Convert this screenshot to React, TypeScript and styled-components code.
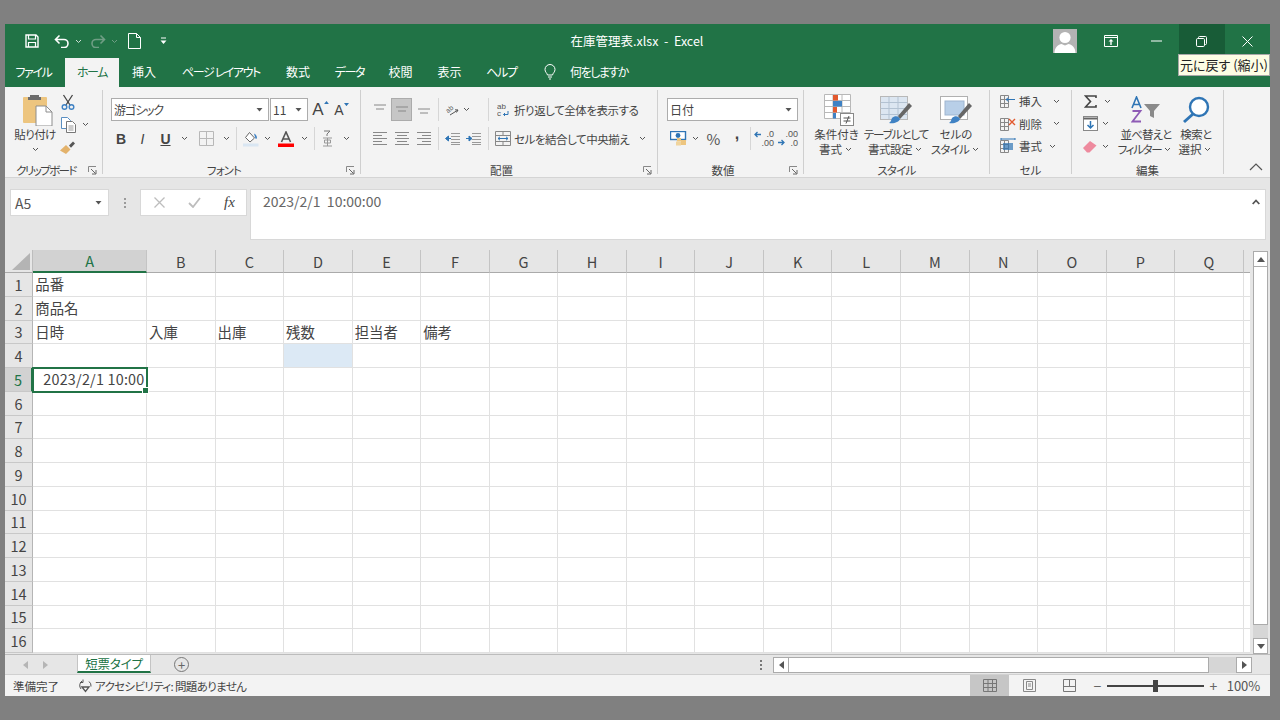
import React from "react";
import styled, { createGlobalStyle } from "styled-components";

const Global = createGlobalStyle`
  html, body { margin: 0; padding: 0; background: #808080; }
  #root { width: 1280px; height: 720px; overflow: hidden; }
  * { box-sizing: border-box; }
`;

const UI = `"Noto Sans CJK JP", "Noto Sans", sans-serif`;
const GREEN = "#217346";

const Page = styled.div`
  width: 1280px; height: 720px; padding: 24px 10px 24px 5px;
  background: #808080;
`;
const Win = styled.div`
  position: relative; height: 672px; display: flex; flex-direction: column;
  background: #e6e6e6; font-family: ${UI}; font-feature-settings: "palt"; color: #444;
`;
const TitleBar = styled.div`
  height: 34px; flex: none; background: ${GREEN}; display: flex; align-items: center; color: #fff;
`;
const Qat = styled.div`
  width: 497px; display: flex; align-items: center; padding-left: 18px; height: 100%;
`;
const Title = styled.div`
  width: 270px; text-align: center; font-size: 12.5px; white-space: pre; padding-bottom: 1px;
`;
const TitleRight = styled.div`
  flex: 1; display: flex; justify-content: flex-end; align-items: center; height: 100%;
`;
const Avatar = styled.div`
  width: 24px; height: 24px; margin-right: 11px; background: #b3b3b3; display: flex; overflow: hidden;
`;
const WinBtn = styled.div<{ $hover?: boolean }>`
  width: 45.5px; height: 100%; display: flex; align-items: center; justify-content: center;
  background: ${p => (p.$hover ? "#185c37" : "transparent")};
`;
const Tip = styled.div`
  position: absolute; left: 1173px; top: 30px; width: 92px; height: 22px;
  background: #fdfde4; border: 1px solid #a8a8a8; color: #222; font-size: 13px;
  line-height: 20px; padding-left: 1px; white-space: nowrap; z-index: 5; overflow: hidden;
`;
const Tabs = styled.div`
  height: 29px; flex: none; background: ${GREEN}; display: flex; align-items: stretch;
`;
const Tab = styled.div<{ $w: number; $active?: boolean; $ls?: number; $pr?: number }>`
  width: ${p => p.$w}px; display: flex; align-items: center; justify-content: center;
  font-size: 12px; white-space: nowrap; padding-bottom: 2px; padding-right: ${p => p.$pr ?? 0}px;
  letter-spacing: ${p => p.$ls ?? 0}px;
  color: ${p => (p.$active ? GREEN : "#fff")};
  background: ${p => (p.$active ? "#f3f3f3" : "transparent")};
`;
const Ribbon = styled.div`
  height: 91px; flex: none; background: #f3f3f3; display: flex; border-bottom: 1px solid #d4d4d4;
  padding-top: 3px;
`;
const Group = styled.div<{ $w: number; $sep?: boolean }>`
  width: ${p => p.$w}px; flex: none; display: flex; flex-direction: column; height: 84px;
  border-right: ${p => (p.$sep === false ? "none" : "1px solid #cfcfcf")};
`;
const GroupBody = styled.div`
  flex: 1; display: flex; min-height: 0;
`;
const GroupFoot = styled.div<{ $plain?: boolean }>`
  height: 14px; flex: none; display: grid; grid-template-columns: 1fr auto 1fr; align-items: center;
  font-size: 11.5px; color: #444; line-height: 14px; padding-right: ${p => (p.$plain ? 0 : 15)}px;
  margin-bottom: -3px; white-space: nowrap;
`;
const Launcher = styled.div`
  justify-self: end; display: flex; margin-right: -10px;
`;
const Col = styled.div<{ $pt?: number; $pl?: number; $gap?: number }>`
  display: flex; flex-direction: column; padding-top: ${p => p.$pt ?? 0}px; padding-left: ${p => p.$pl ?? 0}px;
  gap: ${p => p.$gap ?? 0}px;
`;
const Row = styled.div<{ $h?: number; $pl?: number; $mt?: number }>`
  display: flex; align-items: center; height: ${p => (p.$h ? p.$h + "px" : "auto")};
  padding-left: ${p => p.$pl ?? 0}px; font-size: 11.5px; white-space: nowrap; margin-top: ${p => p.$mt ?? 0}px;
`;
const Lbl = styled.span<{ $ml?: number; $ls?: number; $mt?: number; $size?: number }>`
  margin-left: ${p => p.$ml ?? 0}px; margin-top: ${p => p.$mt ?? 0}px; letter-spacing: ${p => p.$ls ?? 0}px;
  ${p => (p.$size ? `font-size: ${p.$size}px;` : "")}
`;
const T = styled.div<{ $w: number; $h?: number; $on?: boolean; $ml?: number }>`
  width: ${p => p.$w}px; height: ${p => (p.$h ? p.$h + "px" : "23px")}; flex: none; margin-left: ${p => p.$ml ?? 0}px;
  display: flex; align-items: center; justify-content: center;
  background: ${p => (p.$on ? "#c6c6c6" : "transparent")};
  border: ${p => (p.$on ? "1px solid #ababab" : "none")};
`;
const VSep = styled.div<{ $h: number; $mx: number }>`
  width: 1px; height: ${p => p.$h}px; background: #d6d6d6; margin: 0 ${p => p.$mx}px; flex: none;
`;
const Big = styled.div<{ $w: number; $ml?: number }>`
  width: ${p => p.$w}px; flex: none; display: flex; flex-direction: column; align-items: center;
  margin-left: ${p => p.$ml ?? 0}px;
  font-size: 11.5px; line-height: 15px; white-space: nowrap; color: #444;
`;
const BigIcon = styled.div<{ $ml?: number }>`
  height: 35px; margin-top: 2px; margin-left: ${p => p.$ml ?? 0}px;
  display: flex; align-items: center; justify-content: center;
`;
const Sel = styled.div<{ $w: number; $ml?: number }>`
  width: ${p => p.$w}px; height: 23px; margin-left: ${p => p.$ml ?? 0}px; background: #fff; border: 1px solid #acacac;
  display: flex; align-items: center; justify-content: space-between; padding: 0 5px 0 2px;
  font-size: 12px; color: #444; flex: none;
`;
const Bold = styled.span<{ $style?: string; $size?: number; $weight?: number; $under?: boolean }>`
  font-family: "Liberation Sans", sans-serif; font-weight: ${p => p.$weight ?? 700}; font-size: ${p => p.$size ?? 14}px; color: #444;
  font-style: ${p => p.$style ?? "normal"}; text-decoration: ${p => (p.$under ? "underline" : "none")};
`;
const Sized = styled.div`
  display: flex; align-items: flex-start; line-height: 1;
`;
const Comma = styled(Bold)`
  padding-bottom: 9px; line-height: 1;
`;
const Percent = styled.span`
  font-size: 15px; color: #555;
`;
const FormulaZone = styled.div`
  height: 72px; flex: none; background: #e6e6e6; display: flex; padding: 11px 4px 0 5px; align-items: flex-start;
`;
const NameBox = styled.div`
  width: 99px; height: 27px; background: #fff; border: 1px solid #d8d8d8; display: flex; align-items: center;
  justify-content: space-between; padding: 0 6px 0 4px; font-size: 14px; color: #555;
`;
const Dots = styled.div`
  width: 31px; display: flex; flex-direction: column; align-items: center; gap: 2px; height: 27px; justify-content: center;
  & > i { width: 2px; height: 2px; background: #9a9a9a; display: block; }
`;
const FBtns = styled.div`
  width: 107px; height: 27px; background: #fff; border: 1px solid #d8d8d8; display: flex; align-items: center;
  padding-left: 1px;
`;
const FInput = styled.div`
  margin-left: 3px; flex: 1; height: 51px; background: #fff; border: 1px solid #d8d8d8; display: flex;
  justify-content: space-between; padding: 2px 4px 0 12px; font-size: 14px; color: #666; white-space: pre; line-height: 18px;
`;
const SheetArea = styled.div`
  height: 404px; flex: none; display: flex; background: #e6e6e6;
`;
const Sheet = styled.div`
  width: 1245px; flex: none; overflow: hidden;
  display: grid; grid-template-columns: 28.25px 113.75px repeat(17, 68.55px);
  grid-template-rows: 23px repeat(16, 23.75px); align-content: start; background: #fff;
  height: 403px;
`;
const Corner = styled.div`
  background: #e6e6e6; border-right: 1px solid #bdbdbd; border-bottom: 1px solid #aaa; display: flex; align-items: flex-end; justify-content: flex-end; padding: 0 2px 2px 0;
`;
const ColHead = styled.div<{ $on?: boolean }>`
  background: ${p => (p.$on ? "#d2d2d2" : "#e6e6e6")}; color: ${p => (p.$on ? GREEN : "#444")};
  border-right: 1px solid #c4c4c4;
  border-bottom: ${p => (p.$on ? `2px solid ${GREEN}` : "1px solid #aaa")};
  display: flex; align-items: center; justify-content: center; font-size: 14.5px;
`;
const RowHead = styled.div<{ $on?: boolean }>`
  background: ${p => (p.$on ? "#d2d2d2" : "#e6e6e6")}; color: ${p => (p.$on ? GREEN : "#444")};
  border-right: ${p => (p.$on ? `2px solid ${GREEN}` : "1px solid #b5b5b5")};
  border-bottom: 1px solid #c8c8c8;
  display: flex; align-items: center; justify-content: center; font-size: 14.5px;
`;
const Cell = styled.div<{ $sel?: boolean; $tint?: boolean; $right?: boolean }>`
  position: relative; border-right: 1px solid #e1e1e1; border-bottom: 1px solid #e1e1e1;
  background: ${p => (p.$tint ? "#dce9f5" : "#fff")};
  font-size: 14.4px; color: #444; line-height: 22px; padding: 0 ${p => (p.$right ? 1.5 : 2)}px; white-space: nowrap;
  text-align: ${p => (p.$right ? "right" : "left")}; font-feature-settings: normal;
  letter-spacing: ${p => (p.$right ? 0.2 : 0)}px;
  outline: ${p => (p.$sel ? `2px solid ${GREEN}` : "none")}; outline-offset: -1px; z-index: ${p => (p.$sel ? 2 : 0)};
  &::after {
    content: ""; display: ${p => (p.$sel ? "block" : "none")}; position: absolute; right: -3px; bottom: -3px;
    width: 5px; height: 5px; background: ${GREEN}; border: 1px solid #fff;
  }
`;
const VScroll = styled.div`
  width: 20px; flex: none; height: 404px; display: flex; flex-direction: column; padding: 1px 2px 0 3px; background: #e6e6e6;
`;
const SBtn = styled.div<{ $w?: number; $h?: number }>`
  width: ${p => (p.$w ? p.$w + "px" : "15px")}; height: ${p => (p.$h ? p.$h + "px" : "16px")}; background: #fff; border: 1px solid #ababab; flex: none;
  display: flex; align-items: center; justify-content: center;
`;
const VThumb = styled.div`
  height: 358px; width: 15px; background: #fff; border: 1px solid #ababab; border-top: none; flex: none;
`;
const VTrack = styled.div`
  flex: 1; background: #d6d6d6; width: 15px; min-height: 0;
`;
const TabBar = styled.div`
  height: 21px; flex: none; background: #e6e6e6; border-top: 1px solid #bcbcbc; border-bottom: 1px solid #d0d0d0; display: flex; align-items: center; position: relative;
`;
const SheetNav = styled.div`
  width: 72px; display: flex; align-items: center; justify-content: center; gap: 15px; padding-right: 12px;
`;
const SheetTab = styled.div`
  width: 74px; height: 18px; align-self: flex-start; background: #fff; color: ${GREEN}; border-left: 1px solid #c4c4c4; border-right: 1px solid #c4c4c4;
  border-bottom: 2px solid ${GREEN}; font-size: 12.5px; letter-spacing: -0.2px; display: flex; align-items: center; justify-content: center;
`;
const AddSheet = styled.div`
  width: 15px; height: 15px; border: 1px solid #777; border-radius: 50%; margin-left: 23px; color: #666;
  display: flex; align-items: center; justify-content: center; font-size: 13px; line-height: 1;
`;
const HScrollWrap = styled.div`
  margin-left: auto; display: flex; align-items: center; height: 100%; margin-right: 18px;
`;
const HDots = styled.div`
  width: 24px; display: flex; flex-direction: column; align-items: center; gap: 2px;
  & > i { width: 2px; height: 2px; background: #777; display: block; }
`;
const HThumb = styled.div`
  width: 420px; height: 16px; background: #fff; border: 1px solid #ababab; border-left: none; flex: none;
`;
const HTrack = styled.div`
  width: 27px; height: 16px; background: #d6d6d6; flex: none;
`;
const Status = styled.div`
  flex: 1; background: #f3f3f3; display: flex; align-items: center; font-size: 11.5px; color: #444; padding-left: 8px;
`;
const StatusMsg = styled.div`
  display: flex; align-items: center; margin-left: 19px; gap: 2px; letter-spacing: -0.65px;
`;
const StatusRight = styled.div`
  margin-left: auto; display: flex; align-items: center; height: 100%;
`;
const ViewBtn = styled.div<{ $w: number; $on?: boolean }>`
  width: ${p => p.$w}px; height: 100%; display: flex; align-items: center; justify-content: center;
  background: ${p => (p.$on ? "#c6c6c6" : "transparent")};
`;
const Zoom = styled.div`
  width: 97px; height: 2px; background: #444; position: relative; margin: 0 3px;
  &::after { content: ""; position: absolute; left: 46px; top: -5px; width: 5px; height: 12px; background: #444; }
`;
const ZoomSign = styled.div<{ $ml?: number }>`
  width: 13px; text-align: center; font-size: 14px; color: #666; line-height: 1; margin-left: ${p => p.$ml ?? 0}px;
`;
const Pct = styled.div`
  width: 50px; text-align: center; font-size: 13px; color: #555; padding-right: 3px;
`;
const DecBox = styled.div`
  display: grid; grid-template-columns: 7px 13px; row-gap: 0; align-items: center; width: 20px;
`;
const DecText = styled.span`
  font-family: "Liberation Sans", sans-serif; font-size: 9px; line-height: 8.5px; color: #555; text-align: right; font-weight: 400; grid-column: 2;
`;
const Fx = styled.span`
  font-family: "Liberation Serif", serif; font-style: italic; font-size: 15px; font-weight: 400; color: #444;
`;
const SvgText = styled.text<{ $size?: number }>`
  font-family: "Liberation Sans", sans-serif; font-size: ${p => p.$size ?? 8}px; fill: #555;
`;

/* Icons */
const Chev = ({ c = "#555" }: { c?: string }) => (
  <svg width="7" height="5" viewBox="0 0 7 5"><path d="M1 1l2.500 2.500L6 1" fill="none" stroke={c} strokeWidth="1" /></svg>
);
const Caret = ({ c = "#555" }: { c?: string }) => (
  <svg width="7" height="4" viewBox="0 0 7 4"><path d="M0.500 0h6L3.500 3.500z" fill={c} /></svg>
);
const Launch = () => (
  <svg width="9" height="9" viewBox="0 0 9 9"><path d="M.5 6V.5H8" fill="none" stroke="#888" /><path d="M3 3l4.500 4.500M8 4v4H4" fill="none" stroke="#666" /></svg>
);
const Save = () => (
  <svg width="14" height="14" viewBox="0 0 14 14"><path d="M1 1h10l2 2v10H1z" fill="none" stroke="#fff" strokeWidth="1.400" /><path d="M3.500 1v4h7V1M3.500 13V8.500h7V13" fill="none" stroke="#fff" strokeWidth="1.200" /></svg>
);
const Undo = ({ c = "#fff" }: { c?: string }) => (
  <svg width="16" height="14" viewBox="0 0 16 14"><path d="M5.500 1.500L1.500 5.500l4 4M1.500 5.500H10a4 4 0 0 1 0 8H7" fill="none" stroke={c} strokeWidth="1.600" /></svg>
);
const Redo = () => (
  <svg width="16" height="14" viewBox="0 0 16 14"><path d="M10.500 1.500l4 4-4 4M14.500 5.500H6a4 4 0 0 0 0 8h3" fill="none" stroke="#6f9e85" strokeWidth="1.600" /></svg>
);
const NewDoc = () => (
  <svg width="13" height="16" viewBox="0 0 13 16"><path d="M.5.500h8l4 4v11H.5zM8.500.5v4h4" fill="none" stroke="#fff" /></svg>
);
const QatMore = () => (
  <svg width="7" height="8" viewBox="0 0 7 8"><path d="M1 1h5" stroke="#fff" /><path d="M.5 3.500h6L3.500 7z" fill="#fff" /></svg>
);
const Person = () => (
  <svg width="24" height="24" viewBox="0 0 24 24"><circle cx="12" cy="8.500" r="5.600" fill="#fff" /><path d="M1.500 24c0-6 4-8.500 7-9l3.500 1.500 3.500-1.500c3 .5 7 3 7 9z" fill="#fff" /></svg>
);
const RibbonDisp = () => (
  <svg width="14" height="12" viewBox="0 0 14 12"><path d="M.5.500h13v11H.5z" fill="none" stroke="#fff" /><path d="M.5 2.500h13" stroke="#fff" /><path d="M7 4L4.500 6.500h1.800V10h1.400V6.500h1.800z" fill="#fff" /></svg>
);
const Minimize = () => <svg width="11" height="2" viewBox="0 0 11 2"><path d="M0 1h11" stroke="#fff" /></svg>;
const Restore = () => (
  <svg width="11" height="11" viewBox="0 0 11 11"><path d="M2.500 2.500V1.500a1 1 0 0 1 1-1h6a1 1 0 0 1 1 1v6a1 1 0 0 1-1 1h-1" fill="none" stroke="#fff" /><rect x=".5" y="2.500" width="8" height="8" rx="1.200" fill="none" stroke="#fff" /></svg>
);
const Close = () => <svg width="11" height="11" viewBox="0 0 11 11"><path d="M.5.500l10 10M10.500.5l-10 10" stroke="#fff" /></svg>;
const Bulb = () => (
  <svg width="12" height="16" viewBox="0 0 12 16"><path d="M3.500 11C3 9 1 8 1 5.500a5 5 0 0 1 10 0C11 8 9 9 8.500 11zM4 13h4M5 15h2" fill="none" stroke="#fff" /></svg>
);
const Paste = () => (
  <svg width="30" height="32" viewBox="0 0 30 32">
    <rect x="0" y="3" width="24" height="26" rx="1" fill="#edc57f" />
    <path d="M7 3V1h9v2h2v3H5V3z" fill="#6d6d6d" />
    <path d="M13 12h10l6 6v14H13z" fill="#fff" stroke="#8d8d8d" />
    <path d="M23 12v6h6" fill="none" stroke="#8d8d8d" />
  </svg>
);
const Cut = () => (
  <svg width="14" height="16" viewBox="0 0 14 16"><path d="M2.500 1L9 11M11.500 1L5 11" stroke="#444" strokeWidth="1.300" fill="none" /><circle cx="3.500" cy="13" r="2.300" fill="none" stroke="#3f82c4" strokeWidth="1.400" /><circle cx="10.500" cy="13" r="2.300" fill="none" stroke="#3f82c4" strokeWidth="1.400" /></svg>
);
const Copy = () => (
  <svg width="15" height="16" viewBox="0 0 15 16"><path d="M.5.500h6l3 3v8H.5z" fill="#fff" stroke="#5a8fc2" /><path d="M5.500 4.500h6l3 3v8h-9z" fill="#fff" stroke="#777" /><path d="M7.500 9h5M7.500 11h5M7.500 13h5" stroke="#999" /></svg>
);
const Painter = () => (
  <svg width="16" height="14" viewBox="0 0 16 14"><path d="M0 9.500L6 4l4.500 4.500L6 13z" fill="#e3b26b" /><path d="M9 4.500L13 .5l2 2-4 4.200z" fill="#555" /></svg>
);
const Borders = () => (
  <svg width="15" height="15" viewBox="0 0 15 15"><path d="M.5.500h14v14H.5zM7.500.5v14M.5 7.500h14" fill="none" stroke="#b8b8b8" /></svg>
);
const Fill = () => (
  <svg width="16" height="16" viewBox="0 0 16 16"><path d="M6.500 1.500L11.500 7l-4.500 4-4.500-4.500z" fill="#fff" stroke="#666" /><path d="M11 2.500c2 1 3 2.500 3 5l-1.500.3z" fill="#3f82c4" /><rect x="0" y="12.500" width="15.500" height="3" fill="#d9e6f2" /></svg>
);
const FontColor = () => (
  <svg width="16" height="16" viewBox="0 0 16 16"><path d="M3.500 11L8 1l4.500 10M5.200 8h5.600" fill="none" stroke="#555" strokeWidth="1.600" /><rect x="0" y="12.500" width="16" height="3.500" fill="#f00" /></svg>
);
const Phonetic = () => (
  <svg width="11" height="17" viewBox="0 0 11 17"><path d="M2 1h6L5 4M5 4v2" fill="none" stroke="#777" /><path d="M1 8h9M2.500 10h6v3h-6zM5.500 8v8M1 16h9" fill="none" stroke="#999" /></svg>
);
const Lines = ({ ws }: { ws: [number, number][] }) => (
  <svg width="14" height="15" viewBox="0 0 14 15">
    {ws.map(([a, b], i) => <path key={i} d={`M${a} ${1.5 + i * 3}H${b}`} stroke="#888" />)}
  </svg>
);
const VAlign = ({ y }: { y: number }) => (
  <svg width="14" height="11" viewBox="0 0 14 11"><path d={`M1 ${y}h12M3 ${y + 4}h8`} stroke="#888" /></svg>
);
const Orient = () => (
  <svg width="16" height="15" viewBox="0 0 16 15">
    <SvgText $size={7} x="2" y="10" transform="rotate(-40 5 8)">ab</SvgText>
    <path d="M6 13l8-5M14 8l-3-.2M14 8l-1.500 2.500" stroke="#555" fill="none" />
  </svg>
);
const Indent = ({ flip }: { flip?: boolean }) => (
  <svg width="15" height="12" viewBox="0 0 15 12">
    <path d="M6 .5h9M6 3.500h9M6 6.500h9M6 9.500h9M6 11.500h9" stroke="#999" />
    <path d={flip ? "M0 5.500h3.500M3 3l3 2.500L3 8z" : "M6 5.500H3M3.500 3L.5 5.500 3.500 8z"} stroke="#2f75b5" fill="#2f75b5" />
  </svg>
);
const Wrap = () => (
  <svg width="12" height="16" viewBox="0 0 12 16">
    <SvgText x="0" y="7">ab</SvgText>
    <SvgText x="0" y="14">c</SvgText>
    <path d="M11 9v3.500H6.500M8 11l-1.500 1.500L8 14" fill="none" stroke="#2f75b5" />
  </svg>
);
const Merge = () => (
  <svg width="16" height="15" viewBox="0 0 16 15"><path d="M.5.500h15v14H.5zM.5 4.500h15M.5 10.500h15M8 .5v4M8 10.500v4" fill="none" stroke="#888" /><path d="M3 7.500h10M5 5.800L3 7.500l2 1.700M11 5.800l2 1.700-2 1.700" fill="none" stroke="#2f75b5" /></svg>
);
const Acct = () => (
  <svg width="17" height="15" viewBox="0 0 17 15"><rect x=".5" y=".5" width="15" height="8" fill="#fff" stroke="#2f75b5" strokeWidth="1.400" /><circle cx="8" cy="4.500" r="2.400" fill="#2f75b5" /><rect x="7" y="7" width="4" height="3.500" fill="#edc57f" /><rect x="11" y="9" width="5" height="5" fill="#edc57f" /><rect x="6" y="10.500" width="5" height="4" fill="#f0d49d" /></svg>
);
const ArrowL = () => <svg width="7" height="7" viewBox="0 0 7 7"><path d="M7 3.500H1M3.500 1L1 3.500 3.500 6" fill="none" stroke="#2f75b5" strokeWidth="1.300" /></svg>;
const ArrowR = () => <svg width="7" height="7" viewBox="0 0 7 7"><path d="M0 3.500h6M3.500 1L6 3.500 3.500 6" fill="none" stroke="#2f75b5" strokeWidth="1.300" /></svg>;
const DecMore = () => (
  <DecBox><ArrowL /><DecText>.0</DecText><DecText>.00</DecText></DecBox>
);
const DecLess = () => (
  <DecBox><DecText>.00</DecText><ArrowR /><DecText>.0</DecText></DecBox>
);
const CondFmt = () => (
  <svg width="30" height="32" viewBox="0 0 30 32">
    <path d="M.5.500h26v24H.5zM.5 6.500h26M.5 12.500h26M.5 18.500h26M9 .5v24M18 .5v24" fill="#fff" stroke="#b8b8b8" />
    <rect x="9" y="1" width="5" height="5.500" fill="#e2592e" /><rect x="9" y="7" width="9" height="5.500" fill="#3f82c4" />
    <rect x="9" y="13" width="4" height="5.500" fill="#e2592e" /><rect x="9" y="19" width="3" height="5.500" fill="#3f82c4" />
    <rect x="16.500" y="19.500" width="13" height="12" fill="#fff" stroke="#888" /><path d="M19.500 24h7M19.500 27h7M25 22l-3 7.500" stroke="#555" fill="none" />
  </svg>
);
const Brush = () => (
  <>
    <path d="M18 22L29 9l3 3-12 13z" fill="#666" />
    <path d="M12 24c3-3 7-2 8 1-1 3-6 5-11 4 2-1 2-3 3-5z" fill="#3f82c4" />
  </>
);
const TableFmt = () => (
  <svg width="32" height="32" viewBox="0 0 32 32">
    <rect x=".5" y="2.500" width="27" height="23" fill="#dce6f1" stroke="#b8b8b8" />
    <path d="M.5 8.500h27M.5 14.500h27M.5 20.500h27M9 2.500v23M18 2.500v23" stroke="#b3c2d2" fill="none" /><Brush />
  </svg>
);
const CellStyle = () => (
  <svg width="32" height="32" viewBox="0 0 32 32">
    <rect x=".5" y="2.500" width="27" height="23" fill="#fff" stroke="#b0b0b0" />
    <rect x="5" y="7" width="19" height="14" fill="#b8cfe8" stroke="#9fb6d0" /><Brush />
  </svg>
);
const CellIns = ({ kind }: { kind: "ins" | "del" | "fmt" }) => (
  <svg width="16" height="16" viewBox="0 0 16 16">
    <path d="M.5 2.500h8v12h-8zM.5 6.500h8M.5 10.500h8M4.500 2.500v12" fill="none" stroke="#888" />
    {kind === "ins" && <path d="M6 6.500h9M6 6.500l2.500-2M6 6.500l2.500 2" stroke="#2f75b5" fill="none" />}
    {kind === "del" && <path d="M9 3l6 6M15 3l-6 6" stroke="#e2592e" strokeWidth="1.400" fill="none" />}
    {kind === "fmt" && <><rect x="3" y="5" width="10" height="7" fill="#2f75b5" opacity=".7" /><path d="M1 1h14M1 0v2M15 0v2" stroke="#2f75b5" /></>}
  </svg>
);
const Sigma = () => (
  <svg width="13" height="13" viewBox="0 0 13 13"><path d="M12 3V1H1.500l5 5.500-5 5.500H12v-2" fill="none" stroke="#444" strokeWidth="1.600" /></svg>
);
const FillDown = () => (
  <svg width="15" height="15" viewBox="0 0 15 15"><rect x=".5" y=".5" width="14" height="14" fill="#fff" stroke="#888" /><path d="M.5 2.500h14" stroke="#666" strokeWidth="2" /><path d="M7.500 5v7M4.500 9l3 3 3-3" stroke="#2f75b5" strokeWidth="1.500" fill="none" /></svg>
);
const Eraser = () => (
  <svg width="14" height="13" viewBox="0 0 14 13"><path d="M0 8l7-7 6.500 4.500L6.500 12.500H4z" fill="#ee8a9e" /></svg>
);
const SortIc = () => (
  <svg width="30" height="27" viewBox="0 0 30 27"><path d="M13 8h16l-6 7v7l-4-2v-5z" fill="#8a8a8a" /><path d="M1 12L5.500 1 10 12M2.500 8.500h6" fill="none" stroke="#2f75b5" strokeWidth="1.600" /><path d="M1.500 15h8L1.500 25.500h8.500" fill="none" stroke="#8e5bb5" strokeWidth="1.800" /></svg>
);
const Find = () => (
  <svg width="28" height="28" viewBox="0 0 28 28"><circle cx="17" cy="11" r="9" fill="#fff" stroke="#2f75b5" strokeWidth="2.400" /><path d="M11 18L2 26" stroke="#2f75b5" strokeWidth="3" /></svg>
);
const Up = () => <svg width="14" height="8" viewBox="0 0 14 8"><path d="M1 7l6-6 6 6" fill="none" stroke="#555" strokeWidth="1.200" /></svg>;
const UpSmall = () => <svg width="8" height="6" viewBox="0 0 8 6"><path d="M.7 5L4 1.500 7.300 5" fill="none" stroke="#555" strokeWidth="1.800" /></svg>;
const XIc = () => <svg width="11" height="11" viewBox="0 0 11 11"><path d="M.5.500l10 10M10.500.5l-10 10" stroke="#bdbdbd" strokeWidth="1.300" /></svg>;
const Check = () => <svg width="13" height="11" viewBox="0 0 13 11"><path d="M1 6l4 4 7-9" fill="none" stroke="#bdbdbd" strokeWidth="1.800" /></svg>;
const CornerTri = () => <svg width="18" height="17" viewBox="0 0 18 17"><path d="M18 0v17H0z" fill="#b4b4b4" /></svg>;
const TriUp = ({ c = "#555", s = 8 }: { c?: string; s?: number }) => <svg width={s} height={s * 0.625} viewBox="0 0 8 5"><path d="M0 5h8L4 0z" fill={c} /></svg>;
const TriDown = ({ c = "#555", s = 8 }: { c?: string; s?: number }) => <svg width={s} height={s * 0.625} viewBox="0 0 8 5"><path d="M0 0h8L4 5z" fill={c} /></svg>;
const TriL = ({ c = "#555" }: { c?: string }) => <svg width="5" height="8" viewBox="0 0 5 8"><path d="M5 0v8L0 4z" fill={c} /></svg>;
const TriR = ({ c = "#555" }: { c?: string }) => <svg width="5" height="8" viewBox="0 0 5 8"><path d="M0 0v8l5-4z" fill={c} /></svg>;
const Access = () => (
  <svg width="15" height="15" viewBox="0 0 15 15"><path d="M4 3a5.500 5.500 0 0 0-1 8M11 3.500a5.500 5.500 0 0 1 2 5M5 1.500v3H2" fill="none" stroke="#555" /><path d="M4 9l3.500 4.500L11 9z" fill="none" stroke="#555" strokeWidth="1.300" /></svg>
);
const VNormal = () => <svg width="14" height="13" viewBox="0 0 14 13"><path d="M.5.500h13v12H.5zM.5 4.500h13M.5 8.500h13M5 .5v12M9.500.5v12" fill="none" stroke="#777" /></svg>;
const VLayout = () => <svg width="13" height="13" viewBox="0 0 13 13"><path d="M.5.500h12v12H.5z" fill="none" stroke="#888" /><path d="M3.500 2.500h6v8h-6zM5 5h3M5 7h3" fill="none" stroke="#888" /></svg>;
const VBreak = () => <svg width="13" height="13" viewBox="0 0 13 13"><path d="M.5.500h12v12H.5zM.5 7.500h12M6.500.5v7" fill="none" stroke="#777" /></svg>;

const COLS = "ABCDEFGHIJKLMNOPQR".split("");
const DATA: Record<string, string> = {
  "A1": "品番", "A2": "商品名", "A3": "日時", "B3": "入庫", "C3": "出庫", "D3": "残数", "E3": "担当者", "F3": "備考",
  "A5": "2023/2/1 10:00",
};
const TABS: { t: string; w: number; a?: boolean; ls?: number; pr?: number }[] = [
  { t: "ファイル", w: 60, ls: -1.4, pr: 3 },
  { t: "ホーム", w: 54, a: true, ls: -1.4 },
  { t: "挿入", w: 50 },
  { t: "ページ レイアウト", w: 104, ls: -1.4 },
  { t: "数式", w: 50 },
  { t: "データ", w: 53, ls: -1.2 },
  { t: "校閲", w: 49 },
  { t: "表示", w: 49 },
  { t: "ヘルプ", w: 55, ls: -1.2 },
];

export default function App() {
  return (
    <Page>
      <Global />
      <Win>
        <TitleBar>
          <Qat>
            <T $w={18}><Save /></T>
            <T $w={20} $ml={11}><Undo /></T>
            <T $w={12}><Chev c="#cfe0d6" /></T>
            <T $w={20} $ml={4}><Redo /></T>
            <T $w={12}><Chev c="#6f9e85" /></T>
            <T $w={16} $ml={6}><NewDoc /></T>
            <T $w={12} $ml={15}><QatMore /></T>
          </Qat>
          <Title>在庫管理表.xlsx  -  Excel</Title>
          <TitleRight>
            <Avatar><Person /></Avatar>
            <WinBtn><RibbonDisp /></WinBtn>
            <WinBtn><Minimize /></WinBtn>
            <WinBtn $hover><Restore /></WinBtn>
            <WinBtn><Close /></WinBtn>
          </TitleRight>
        </TitleBar>
        <Tip>元に戻す (縮小)</Tip>
        <Tabs>
          {TABS.map(x => <Tab key={x.t} $w={x.w} $active={x.a} $ls={x.ls} $pr={x.pr}>{x.t}</Tab>)}
          <T $w={27} $h={27} $ml={7}><Bulb /></T>
          <Tab $w={72} $ls={-1.5}>何をしますか</Tab>
        </Tabs>
        <Ribbon>
          <Group $w={98}>
            <GroupBody>
              <Big $w={46} $ml={7}>
                <BigIcon $ml={5}><Paste /></BigIcon>
                <Lbl $ls={-0.6}>貼り付け</Lbl>
                <T $w={20} $h={15}><Chev /></T>
              </Big>
              <Col $pt={0}>
                <T $w={20}><Cut /></T>
                <Row><T $w={20}><Copy /></T><T $w={14}><Chev /></T></Row>
                <T $w={20}><Painter /></T>
              </Col>
            </GroupBody>
            <GroupFoot><span /><Lbl $ls={-1.6}>クリップボード</Lbl><Launcher><Launch /></Launcher></GroupFoot>
          </Group>
          <Group $w={258}>
            <GroupBody>
              <Col $pt={8} $pl={8} $gap={6}>
                <Row>
                  <Sel $w={158}><Lbl $ls={-1.1}>游ゴシック</Lbl><Caret /></Sel>
                  <Sel $w={38} $ml={1}>11<Caret /></Sel>
                  <T $w={21} $ml={2}><Sized><Bold $size={17} $weight={400}>A</Bold><TriUp c="#2f75b5" s={5} /></Sized></T>
                  <T $w={21}><Sized><Bold $size={14} $weight={400}>A</Bold><TriDown c="#2f75b5" s={5} /></Sized></T>
                </Row>
                <Row>
                  <T $w={20}><Bold>B</Bold></T>
                  <T $w={23}><Bold $style="italic" $weight={400}>I</Bold></T>
                  <T $w={23}><Bold $under>U</Bold></T>
                  <T $w={14}><Chev /></T>
                  <T $w={30}><Borders /></T>
                  <T $w={11}><Chev /></T>
                  <VSep $h={23} $mx={4} />
                  <T $w={19}><Fill /></T>
                  <T $w={14}><Chev /></T>
                  <T $w={24}><FontColor /></T>
                  <T $w={12}><Chev /></T>
                  <VSep $h={23} $mx={4} />
                  <T $w={16}><Phonetic /></T>
                  <T $w={22}><Chev /></T>
                </Row>
              </Col>
            </GroupBody>
            <GroupFoot><span /><Lbl $ls={-0.9}>フォント</Lbl><Launcher><Launch /></Launcher></GroupFoot>
          </Group>
          <Group $w={297}>
            <GroupBody>
              <Col $pt={8} $gap={6}>
                <Row $h={23}>
                  <T $w={22} $ml={8}><VAlign y={1} /></T>
                  <T $w={21} $on><VAlign y={3} /></T>
                  <T $w={24}><VAlign y={5} /></T>
                  <VSep $h={23} $mx={2} />
                  <T $w={22}><Orient /></T>
                  <T $w={7}><Chev /></T>
                  <T $w={15} />
                  <VSep $h={23} $mx={3} />
                  <T $w={22}><Wrap /></T>
                  <Lbl $ls={-0.45}>折り返して全体を表示する</Lbl>
                </Row>
                <Row $h={23}>
                  <T $w={22} $ml={8}><Lines ws={[[0, 14], [0, 9], [0, 14], [0, 9], [0, 14]]} /></T>
                  <T $w={22}><Lines ws={[[0, 14], [2, 12], [0, 14], [2, 12], [0, 14]]} /></T>
                  <T $w={22}><Lines ws={[[0, 14], [5, 14], [0, 14], [5, 14], [0, 14]]} /></T>
                  <VSep $h={23} $mx={3} />
                  <T $w={20}><Indent /></T>
                  <T $w={23}><Indent flip /></T>
                  <VSep $h={23} $mx={3} />
                  <T $w={22}><Merge /></T>
                  <Lbl $ls={-0.45}>セルを結合して中央揃え</Lbl>
                  <T $w={26}><Chev /></T>
                </Row>
              </Col>
            </GroupBody>
            <GroupFoot><span /><span>配置</span><Launcher><Launch /></Launcher></GroupFoot>
          </Group>
          <Group $w={146}>
            <GroupBody>
              <Col $pt={8} $pl={9} $gap={6}>
                <Sel $w={131}>日付<Caret /></Sel>
                <Row>
                  <T $w={22}><Acct /></T>
                  <T $w={12}><Chev /></T>
                  <T $w={25}><Percent>%</Percent></T>
                  <T $w={22}><Comma $size={16}>,</Comma></T>
                  <VSep $h={23} $mx={2} />
                  <T $w={22}><DecMore /></T>
                  <T $w={26}><DecLess /></T>
                </Row>
              </Col>
            </GroupBody>
            <GroupFoot><span /><span>数値</span><Launcher><Launch /></Launcher></GroupFoot>
          </Group>
          <Group $w={186}>
            <GroupBody>
              <Big $w={63} $ml={1}>
                <BigIcon $ml={4}><CondFmt /></BigIcon>
                <span>条件付き</span>
                <Row>書式<T $w={12} $h={15}><Chev /></T></Row>
              </Big>
              <Big $w={56}>
                <BigIcon><TableFmt /></BigIcon>
                <Lbl $ls={-1.1}>テーブルとして</Lbl>
                <Row><Lbl $ls={-0.5}>書式設定</Lbl><T $w={12} $h={15}><Chev /></T></Row>
              </Big>
              <Big $w={64}>
                <BigIcon><CellStyle /></BigIcon>
                <span>セルの</span>
                <Row><Lbl $ls={-0.7}>スタイル</Lbl><T $w={12} $h={15}><Chev /></T></Row>
              </Big>
            </GroupBody>
            <GroupFoot $plain><span /><Lbl $ls={-0.7}>スタイル</Lbl><span /></GroupFoot>
          </Group>
          <Group $w={82}>
            <GroupBody>
              <Col $pl={10}>
                <Row $h={22.5}><CellIns kind="ins" /><Lbl $ml={3}>挿入</Lbl><T $w={28}><Chev /></T></Row>
                <Row $h={22.5}><CellIns kind="del" /><Lbl $ml={3}>削除</Lbl><T $w={28}><Chev /></T></Row>
                <Row $h={22.5}><CellIns kind="fmt" /><Lbl $ml={3}>書式</Lbl><T $w={20}><Chev /></T></Row>
              </Col>
            </GroupBody>
            <GroupFoot $plain><span /><span>セル</span><span /></GroupFoot>
          </Group>
          <Group $w={152}>
            <GroupBody>
              <Col $pl={10}>
                <Row $h={22.5}><T $w={16}><Sigma /></T><T $w={19}><Chev /></T></Row>
                <Row $h={22.5}><T $w={16}><FillDown /></T><T $w={15}><Chev /></T></Row>
                <Row $h={22.5}><T $w={16}><Eraser /></T><T $w={15}><Chev /></T></Row>
              </Col>
              <Big $w={66} $ml={-4}>
                <BigIcon $ml={0}><SortIc /></BigIcon>
                <Lbl $ls={-0.9}>並べ替えと</Lbl>
                <Row><Lbl $ls={-1.3}>フィルター</Lbl><T $w={13} $h={15}><Chev /></T></Row>
              </Big>
              <Big $w={34}>
                <BigIcon><Find /></BigIcon>
                <Lbl $ls={-0.5}>検索と</Lbl>
                <Row>選択<T $w={12} $h={15}><Chev /></T></Row>
              </Big>
            </GroupBody>
            <GroupFoot $plain><span /><span>編集</span><span /></GroupFoot>
          </Group>
          <Group $w={46} $sep={false}>
            <GroupBody />
            <Row $h={14} $pl={25} $mt={3}><Up /></Row>
          </Group>
        </Ribbon>
        <FormulaZone>
          <NameBox>A5<Caret /></NameBox>
          <Dots><i /><i /><i /></Dots>
          <FBtns>
            <T $w={34} $h={25}><XIc /></T>
            <T $w={37} $h={25}><Check /></T>
            <T $w={33} $h={25}><Fx>fx</Fx></T>
          </FBtns>
          <FInput><span>2023/2/1  10:00:00</span><T $w={10} $h={20}><UpSmall /></T></FInput>
        </FormulaZone>
        <SheetArea>
          <Sheet>
            <Corner><CornerTri /></Corner>
            {COLS.map(c => <ColHead key={c} $on={c === "A"}>{c === "R" ? "" : c}</ColHead>)}
            {Array.from({ length: 16 }, (_, i) => i + 1).map(r => (
              <React.Fragment key={r}>
                <RowHead $on={r === 5}>{r}</RowHead>
                {COLS.map(c => {
                  const id = c + r;
                  return <Cell key={id} $sel={id === "A5"} $tint={id === "D4"} $right={id === "A5"}>{DATA[id]}</Cell>;
                })}
              </React.Fragment>
            ))}
          </Sheet>
          <VScroll>
            <SBtn><TriUp /></SBtn>
            <VThumb />
            <VTrack />
            <SBtn><TriDown /></SBtn>
          </VScroll>
        </SheetArea>
        <TabBar>
          <SheetNav><TriL c="#b5b5b5" /><TriR c="#b5b5b5" /></SheetNav>
          <SheetTab>短票タイプ</SheetTab>
          <AddSheet>+</AddSheet>
          <HScrollWrap>
            <HDots><i /><i /><i /></HDots>
            <SBtn $w={16}><TriL /></SBtn>
            <HThumb />
            <HTrack />
            <SBtn $w={16}><TriR /></SBtn>
          </HScrollWrap>
        </TabBar>
        <Status>
          <span>準備完了</span>
          <StatusMsg><Access /><span>アクセシビリティ: 問題ありません</span></StatusMsg>
          <StatusRight>
            <ViewBtn $w={39} $on><VNormal /></ViewBtn>
            <ViewBtn $w={40}><VLayout /></ViewBtn>
            <ViewBtn $w={40}><VBreak /></ViewBtn>
            <ZoomSign $ml={2}>−</ZoomSign>
            <Zoom />
            <ZoomSign>+</ZoomSign>
            <Pct>100%</Pct>
          </StatusRight>
        </Status>
      </Win>
    </Page>
  );
}
